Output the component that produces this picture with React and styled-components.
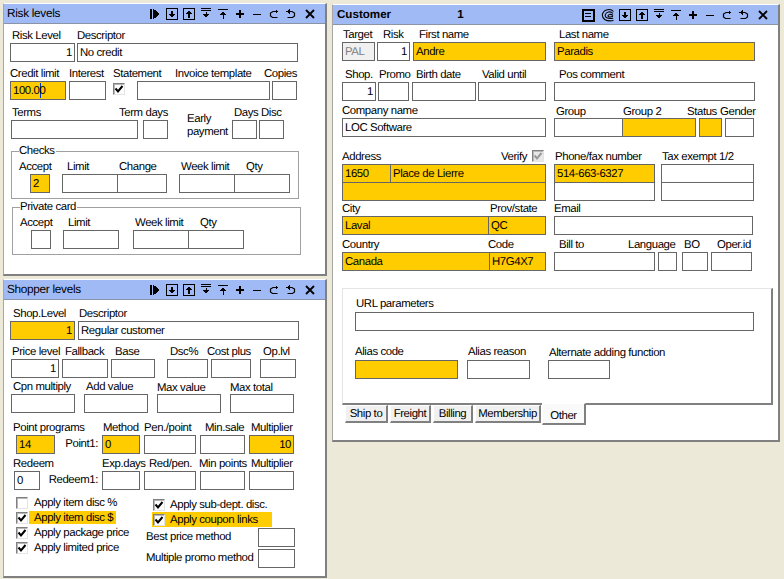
import React from 'react';
import styled, { createGlobalStyle, css } from 'styled-components';

const Global = createGlobalStyle`
  html, body { margin: 0; padding: 0; background: #ece9d8; }
  body {
    width: 784px;
    height: 579px;
    overflow: hidden;
    font: 11.4px/15px "Liberation Sans", Arial, sans-serif;
    letter-spacing: -0.4px;
    text-rendering: geometricPrecision;
    color: #000;
  }
`;

const Desktop = styled.div`
  position: relative;
  width: 784px;
  height: 579px;
`;

const Window = styled.section`
  position: absolute;
  box-sizing: border-box;
  left: ${p => p.$x}px;
  top: ${p => p.$y}px;
  width: ${p => p.$w}px;
  height: ${p => p.$h}px;
  background: #fff;
  border-style: solid;
  border-width: 1px 2px 2px 1px;
  border-color: #fff #808080 #808080 #a6a6a6;
`;

const TitleBar = styled.header`
  box-sizing: border-box;
  display: flex;
  align-items: center;
  height: 20px;
  background: #a0baf6;
  border-bottom: 1px solid #8b93a6;
  padding: 0 8px 0 ${p => (p.$bold ? 4 : 3)}px;
  font-weight: ${p => (p.$bold ? 700 : 400)};
  font-size: ${p => (p.$bold ? 11.6 : 11.8)}px;
  letter-spacing: ${p => (p.$bold ? 0 : -0.3)}px;
`;

const TitleText = styled.span`
  margin-left: ${p => p.$ml || 0}px;
`;

const Tools = styled.div`
  display: flex;
  margin-left: auto;
`;

const ToolSlot = styled.svg`
  display: block;
  width: 14px;
  height: 14px;
  margin-left: ${p => p.$ml ?? 3}px;
  shape-rendering: crispEdges;
  fill: none;
  stroke: #000;
`;

const Row = styled.div`
  display: flex;
  margin-top: ${p => p.$mt || 0}px;
  margin-left: ${p => p.$left || 0}px;
`;

const FieldWrap = styled.div`
  flex: none;
  width: ${p => p.$w}px;
  margin-left: ${p => p.$ml || 0}px;
`;

const Label = styled.div`
  box-sizing: border-box;
  height: 15px;
  padding-top: ${p => Math.max(p.$dy || 0, 0)}px;
  margin-top: ${p => Math.min(p.$dy || 0, 0)}px;
  margin-bottom: ${p => Math.max(-(p.$dy || 0), 0)}px;
  margin-left: ${p => p.$dx || 0}px;
  white-space: nowrap;
  line-height: 16px;
`;

const toneStyles = {
  plain: css`background: #fff;`,
  key: css`background: #ffcc00;`,
  off: css`background: #f0f0f0; color: #808080;`,
};

const Box = styled.div`
  box-sizing: border-box;
  width: ${p => (p.$w ? `${p.$w}px` : 'auto')};
  height: 19px;
  margin-left: ${p => p.$ml || 0}px;
  margin-top: ${p => p.$mt || 0}px;
  border: 1px solid #666;
  padding: 0 2px;
  line-height: 18px;
  white-space: nowrap;
  overflow: hidden;
  text-align: ${p => (p.$right ? 'right' : 'left')};
  flex: none;
  ${p => toneStyles[p.$tone || 'plain']}
`;

const Caret = styled.span`
  display: inline-block;
  width: 0;
  height: 15px;
  margin-right: -1px;
  vertical-align: middle;
  border-left: 1px solid #0033cc;
`;

const Tick = styled.span`
  box-sizing: border-box;
  display: block;
  flex: none;
  width: 12px;
  height: 12px;
  margin-top: ${p => p.$mt || 0}px;
  border-style: solid;
  border-width: 1px;
  border-color: #808080 #e4e4e4 #e4e4e4 #808080;
  background: ${p => (p.$off ? '#e8e8e8' : '#fff')};
  box-shadow: inset 1px 1px 0 #b8b8b8;
`;

const TickMark = styled.svg`
  display: block;
  width: 10px;
  height: 10px;
  fill: none;
  stroke: ${p => (p.$off ? '#9a9a9a' : '#000')};
  stroke-width: 2;
`;

const Check = ({ on, off, mt }) => (
  <Tick $off={off} $mt={mt}>
    {on && (
      <TickMark viewBox="0 0 10 10" $off={off}>
        <path d="M1.5 4.5 L4 7.5 L8.5 2" />
      </TickMark>
    )}
  </Tick>
);

const F = ({ l, w, ml, dx, dy, v, tone, right, children }) => (
  <FieldWrap $w={w} $ml={ml}>
    <Label $dx={dx} $dy={dy}>{l}</Label>
    {children || <Box $tone={tone} $right={right}>{v}</Box>}
  </FieldWrap>
);

const Group = styled.div`
  position: relative;
  box-sizing: border-box;
  width: ${p => p.$w}px;
  height: 48px;
  margin-top: ${p => p.$mt}px;
  margin-left: ${p => p.$left}px;
  border: 1px solid #a0a0a0;
  padding-top: 7px;
`;

const Legend = styled.span`
  position: absolute;
  left: ${p => p.$x}px;
  top: -7px;
  background: #fff;
  padding-right: 1px;
  line-height: 13px;
`;

const Note = styled.div`
  flex: none;
  width: 45px;
  margin-left: ${p => p.$ml}px;
  margin-top: 8px;
  line-height: 13px;
`;

const SideLabel = styled.div`
  flex: none;
  box-sizing: border-box;
  width: ${p => p.$w}px;
  height: 19px;
  margin-top: 15px;
  padding-right: 4px;
  line-height: 19px;
  text-align: right;
`;

const Options = styled.div`
  display: flex;
  margin-top: 5px;
`;

const LeftOptions = styled.div`
  width: 133px;
  margin-left: 12px;
  flex: none;
`;

const RightOptions = styled.div`
  padding-top: 2px;
  margin-left: -4px;
  width: 152px;
  flex: none;
`;

const Option = styled.div`
  display: flex;
  align-items: center;
  height: 15px;
`;

const OptionFull = styled(Option)`
  margin-left: 7px;
  padding-left: 1px;
  width: 119px;
  background: ${p => (p.$hl ? '#ffcc00' : 'transparent')};
`;

const OptionText = styled.span`
  margin-left: ${p => (p.$hl ? 1 : 6)}px;
  padding-left: ${p => (p.$hl ? 5 : 0)}px;
  padding-right: ${p => (p.$hl ? 3 : 0)}px;
  line-height: 14px;
  height: 13px;
  white-space: nowrap;
  background: ${p => (p.$hl ? '#ffcc00' : 'transparent')};
`;

const OptionTextRight = styled.span`
  margin-left: 5px;
  line-height: 16px;
  white-space: nowrap;
`;

const MethodRow = styled.div`
  display: flex;
  align-items: center;
  justify-content: space-between;
  width: 150px;
  margin-top: ${p => p.$mt}px;
  padding-left: 1px;
  box-sizing: border-box;
  white-space: nowrap;
`;

const LabelRow = styled.div`
  display: flex;
  align-items: center;
  height: 15px;
  line-height: 16px;
  white-space: nowrap;
`;

const Verify = styled.span`
  margin-left: auto;
`;

const VerifyTick = styled.span`
  margin-right: 2px;
  margin-left: 5px;
`;

const Joined = styled.div`
  display: flex;
`;

const Panel = styled.div`
  box-sizing: border-box;
  width: 431px;
  height: 117px;
  margin-top: 17px;
  margin-left: 9px;
  padding-top: 8px;
  border-style: solid;
  border-width: 1px 2px 2px 1px;
  border-color: #e4e4e4 #808080 #808080 #e4e4e4;
`;

const Tabs = styled.nav`
  display: flex;
  align-items: flex-start;
  margin-left: 12px;
`;

const Tab = styled.div`
  box-sizing: border-box;
  width: ${p => p.$w}px;
  height: ${p => (p.$active ? 22 : 18)}px;
  margin-top: ${p => (p.$active ? -2 : 0)}px;
  margin-left: ${p => p.$ml}px;
  border-style: solid;
  border-width: 1px 2px 2px 1px;
  border-color: #fff #808080 #808080 #fff;
  background: ${p => (p.$active ? '#fafafa' : '#f0f0f0')};
  text-align: center;
  line-height: ${p => (p.$active ? 24 : 17)}px;
  white-space: nowrap;
`;

/* toolbar drawings */
const I = ({ ml, children }) => (
  <ToolSlot viewBox="0 0 14 14" $ml={ml}>{children}</ToolSlot>
);

const Play = () => (
  <I ml={0}>
    <path d="M2 2h2v10h-2z M5 1.5 L12 7 L5 12.5 Z" fill="#000" stroke="none" />
  </I>
);
const BoxDown = () => (
  <I>
    <rect x="1.5" y="1.5" width="11" height="11" />
    <path d="M7 3.5v6" strokeWidth="1.4" />
    <path d="M4 7h6l-3 4z" fill="#000" stroke="none" />
  </I>
);
const BoxUp = () => (
  <I>
    <rect x="1.5" y="1.5" width="11" height="11" />
    <path d="M7 5v6" strokeWidth="1.4" />
    <path d="M4 7h6l-3-4z" fill="#000" stroke="none" />
  </I>
);
const Last = () => (
  <I>
    <path d="M2 1.5h10 M2 3.5h10 M7 5v3" strokeWidth="1" />
    <path d="M3.5 7h7L7 11z" fill="#000" stroke="none" />
  </I>
);
const First = () => (
  <I>
    <path d="M2 2.5h10 M7 6v6" strokeWidth="1" />
    <path d="M3.5 8h7L7 4z" fill="#000" stroke="none" />
  </I>
);
const Plus = () => (
  <I><path d="M3 7h8 M7 3v8" strokeWidth="1.4" /></I>
);
const Minus = () => (
  <I><path d="M3 7.5h8" strokeWidth="1.2" /></I>
);
const Redo = () => (
  <I>
    <path d="M10.5 4.5H6L3.5 6v3l2 1.5h5" strokeWidth="1.2" style={{ shapeRendering: 'auto' }} />
    <path d="M8.5 2v5l3-2.5z" fill="#000" stroke="none" />
  </I>
);
const Undo = () => (
  <I>
    <path d="M3.5 4.5H8l2.5 1.5v3L8.5 10.5h-5" strokeWidth="1.2" style={{ shapeRendering: 'auto' }} />
    <path d="M5.5 2v5l-3-2.5z" fill="#000" stroke="none" />
  </I>
);
const Close = () => (
  <I ml={5}>
    <path d="M3 3l8 8 M11 3l-8 8" strokeWidth="1.8" style={{ shapeRendering: 'auto' }} />
  </I>
);
const Form = () => (
  <I ml={0}>
    <rect x="1.5" y="1.5" width="11" height="11" strokeWidth="2" />
    <path d="M4 5.5h6 M4 8.5h6" strokeWidth="1.4" />
  </I>
);
const At = () => (
  <I ml={6}>
    <path
      d="M12.5 3.5C10 .5 3 .8 1.5 6c-1 5 4 8 11 6.5 M12 5.5C9.5 2.8 5 3.5 4.2 7c-.4 3 3.3 4.2 8 3.2 M12 7.5C10 5.7 7 6.3 7 8c.3 1 3 1 5 .5"
      strokeWidth="1.1"
      style={{ shapeRendering: 'auto' }}
    />
  </I>
);

const StandardTools = () => (
  <>
    <BoxDown /><BoxUp /><Last /><First /><Plus /><Minus /><Redo /><Undo /><Close />
  </>
);

const RiskWindow = () => (
  <Window $x={3} $y={3} $w={324} $h={273}>
    <TitleBar>
      <TitleText>Risk levels</TitleText>
      <Tools><Play /><StandardTools /></Tools>
    </TitleBar>
    <Row $mt={4} $left={6}>
      <F l="Risk Level" w={65} dx={2} v="1" right />
      <F l="Descriptor" w={221} ml={2} v="No credit" />
    </Row>
    <Row $mt={4} $left={6}>
      <F l="Credit limit" w={56}>
        <Box $tone="key">100.0<Caret />0</Box>
      </F>
      <F l="Interest" w={37} ml={3} />
      <F l="Statement" w={12} ml={7}><Check on mt={2} /></F>
      <F l="Invoice template" w={133} ml={12} dx={38} />
      <F l="Copies" w={25} ml={2} dx={-8} />
    </Row>
    <Row $mt={5} $left={7}>
      <F l="Terms" w={127} dx={1} />
      <F l="Term days" w={25} ml={5} dx={-24} />
      <Note $ml={19}>Early payment</Note>
      <F l="Days" w={25} dx={2} />
      <F l="Disc" w={25} ml={2} dx={2} />
    </Row>
    <Group $w={288} $mt={12} $left={7}>
      <Legend $x={7}>Checks</Legend>
      <Row $left={18}>
        <F l="Accept" w={20} dx={-11} v="2" tone="key" />
        <F l="Limit" w={56} ml={12} dx={5} />
        <F l="Change" w={50} ml={-1} dx={2} />
        <F l="Week limit" w={56} ml={12} dx={2} />
        <F l="Qty" w={56} ml={-1} dx={12} />
      </Row>
    </Group>
    <Group $w={289} $mt={8} $left={8}>
      <Legend $x={7}>Private card</Legend>
      <Row $left={18}>
        <F l="Accept" w={20} dx={-11} />
        <F l="Limit" w={56} ml={12} dx={5} />
        <F l="Week limit" w={56} ml={14} dx={2} />
        <F l="Qty" w={56} ml={-1} dx={12} />
      </Row>
    </Group>
  </Window>
);

const ShopperWindow = () => (
  <Window $x={3} $y={279} $w={324} $h={299}>
    <TitleBar>
      <TitleText>Shopper levels</TitleText>
      <Tools><Play /><StandardTools /></Tools>
    </TitleBar>
    <Row $mt={6} $left={6}>
      <F l="Shop.Level" w={65} dx={3} v="1" right tone="key" />
      <F l="Descriptor" w={221} ml={3} dx={1} v="Regular customer" />
    </Row>
    <Row $mt={4} $left={7}>
      <F l="Price level" w={48} dx={1} v="1" right />
      <F l="Fallback" w={46} ml={3} dx={3} />
      <F l="Base" w={44} ml={3} dx={4} />
      <F l="Dsc%" w={41} ml={12} dx={3} />
      <F l="Cost plus" w={40} ml={3} dx={-4} />
      <F l="Op.lvl" w={36} ml={9} dx={3} />
    </Row>
    <Row $mt={1} $left={7}>
      <F l="Cpn multiply" w={64} dx={2} />
      <F l="Add value" w={64} ml={9} dx={2} />
      <F l="Max value" w={64} ml={9} dy={1} />
      <F l="Max total" w={64} ml={9} dy={1} />
    </Row>
    <Row $mt={7} $left={12}>
      <F l="Point programs" w={39} dx={-3} v="14" tone="key" />
      <SideLabel $w={47}>Point1:</SideLabel>
      <F l="Method" w={38} dx={1} v="0" tone="key" />
      <F l="Pen./point" w={52} ml={4} />
      <F l="Min.sale" w={45} ml={4} dx={5} />
      <F l="Multiplier" w={45} ml={4} dx={2} v="10" right tone="key" />
    </Row>
    <Row $mt={2} $left={10}>
      <F l="Redeem" w={26} dx={-1} v="0" />
      <SideLabel $w={62}>Redeem1:</SideLabel>
      <F l="Exp.days" w={38} />
      <F l="Red/pen." w={52} ml={4} dx={5} />
      <F l="Min points" w={45} ml={4} dx={-1} />
      <F l="Multiplier" w={45} ml={4} dx={2} />
    </Row>
    <Options>
      <LeftOptions>
        <Option><Check /><OptionText>Apply item disc %</OptionText></Option>
        <Option><Check on /><OptionText $hl>Apply item disc $</OptionText></Option>
        <Option><Check on /><OptionText>Apply package price</OptionText></Option>
        <Option><Check on /><OptionText>Apply limited price</OptionText></Option>
      </LeftOptions>
      <RightOptions>
        <OptionFull><Check on /><OptionTextRight>Apply sub-dept. disc.</OptionTextRight></OptionFull>
        <OptionFull $hl><Check on /><OptionTextRight>Apply coupon links</OptionTextRight></OptionFull>
        <MethodRow $mt={1}>Best price method<Box $w={37} /></MethodRow>
        <MethodRow $mt={2}>Multiple promo method<Box $w={37} /></MethodRow>
      </RightOptions>
    </Options>
  </Window>
);

const CustomerWindow = () => (
  <Window $x={332} $y={4} $w={448} $h={438}>
    <TitleBar $bold>
      <TitleText>Customer</TitleText>
      <TitleText $ml={66}>1</TitleText>
      <Tools><Form /><At /><StandardTools /></Tools>
    </TitleBar>
    <Row $mt={2} $left={9}>
      <F l="Target" w={33} dx={1} v="PAL" tone="off" />
      <F l="Risk" w={33} ml={2} dx={6} v="1" right />
      <F l="First name" w={133} ml={3} dx={6} v="Andre" tone="key" />
      <F l="Last name" w={201} ml={8} dx={5} v="Paradis" tone="key" />
    </Row>
    <Row $mt={6} $left={9}>
      <F l="Shop." w={34} dx={3} v="1" right />
      <F l="Promo" w={31} ml={2} dx={1} />
      <F l="Birth date" w={64} ml={3} dx={4} />
      <F l="Valid until" w={68} ml={2} dx={4} />
      <F l="Pos comment" w={201} ml={8} dx={5} />
    </Row>
    <Row $mt={2} $left={9}>
      <F l="Company name" w={204} v="LOC Software" />
      <F l="Group" w={69} ml={8} dx={2} dy={1} />
      <F l="Group 2" w={74} ml={-1} dx={1} dy={1} tone="key" />
      <F l="Status" w={23} ml={3} dx={-12} dy={1} tone="key" />
      <F l="Gender" w={29} ml={3} dx={-5} dy={1} />
    </Row>
    <Row $mt={12} $left={9}>
      <FieldWrap $w={204}>
        <LabelRow>
          Address
          <Verify>Verify</Verify>
          <VerifyTick><Check on off mt={-2} /></VerifyTick>
        </LabelRow>
        <Joined>
          <Box $w={49} $tone="key">1650</Box>
          <Box $w={156} $ml={-1} $tone="key">Place de Lierre</Box>
        </Joined>
        <Box $mt={-1} $tone="key" />
      </FieldWrap>
      <FieldWrap $w={101} $ml={8}>
        <Label $dx={1}>Phone/fax number</Label>
        <Box $tone="key">514-663-6327</Box>
        <Box $mt={-1} />
      </FieldWrap>
      <FieldWrap $w={93} $ml={6}>
        <Label $dx={1}>Tax exempt 1/2</Label>
        <Box />
        <Box $mt={-1} />
      </FieldWrap>
    </Row>
    <Row $left={9}>
      <F l="City" w={147} v="Laval" tone="key" />
      <F l="Prov/state" w={58} ml={-1} dx={2} v="QC" tone="key" />
      <F l="Email" w={199} ml={8} />
    </Row>
    <Row $mt={2} $left={9}>
      <F l="Country" w={148} v="Canada" tone="key" />
      <F l="Code" w={57} ml={-1} dx={-1} v="H7G4X7" tone="key" />
      <F l="Bill to" w={101} ml={8} dx={5} />
      <F l="Language" w={19} ml={3} dx={-30} />
      <F l="BO" w={26} ml={5} dx={2} />
      <F l="Oper.id" w={41} ml={3} dx={6} />
    </Row>
    <Panel>
      <Row $left={12}>
        <F l="URL parameters" w={399} dx={1} dy={-1} />
      </Row>
      <Row $mt={14} $left={12}>
        <F l="Alias code" w={103} dy={-1} tone="key" />
        <F l="Alias reason" w={63} ml={9} dx={1} dy={-1} />
        <F l="Alternate adding function" w={62} ml={18} dx={1} />
      </Row>
    </Panel>
    <Tabs>
      <Tab $w={43} $ml={0}>Ship to</Tab>
      <Tab $w={41} $ml={2}>Freight</Tab>
      <Tab $w={40} $ml={2}>Billing</Tab>
      <Tab $w={66} $ml={2}>Membership</Tab>
      <Tab $w={44} $ml={1} $active>Other</Tab>
    </Tabs>
  </Window>
);

export default function App() {
  return (
    <Desktop>
      <Global />
      <RiskWindow />
      <ShopperWindow />
      <CustomerWindow />
    </Desktop>
  );
}
